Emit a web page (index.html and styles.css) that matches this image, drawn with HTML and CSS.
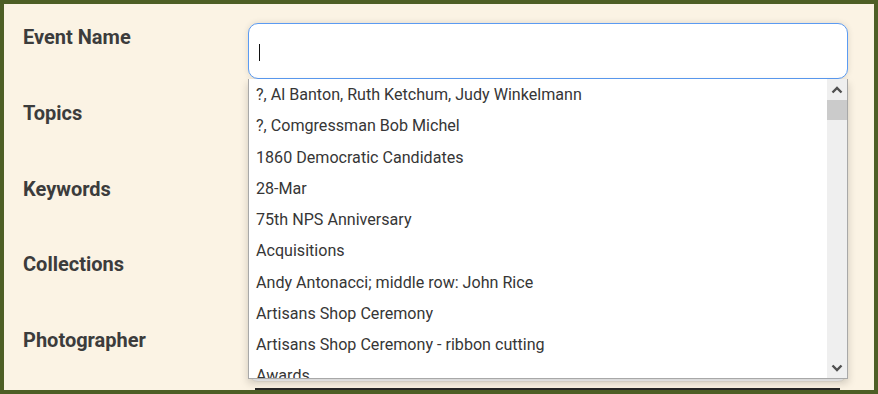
FILE: index.html
```html
<!DOCTYPE html>
<html lang="en">
<head>
    <meta charset="UTF-8">
    <meta name="viewport" content="width=device-width, initial-scale=1.0">
    <title>Photo Search</title>
    <link rel="stylesheet" href="styles.css">
</head>
<body>
    <div class="frame">
        <div class="form">
            <div class="row">
                <label class="field-label">Event Name</label>
                <div class="field">
                    <div class="text-box focused"><span class="caret"></span></div>
                    <div class="suggest">
                        <ul class="suggest-list">
                            <li>?, Al Banton, Ruth Ketchum, Judy Winkelmann</li>
                            <li>?, Comgressman Bob Michel</li>
                            <li>1860 Democratic Candidates</li>
                            <li>28-Mar</li>
                            <li>75th NPS Anniversary</li>
                            <li>Acquisitions</li>
                            <li>Andy Antonacci; middle row: John Rice</li>
                            <li>Artisans Shop Ceremony</li>
                            <li>Artisans Shop Ceremony - ribbon cutting</li>
                            <li>Awards</li>
                        </ul>
                        <div class="scrollbar">
                            <div class="scroll-btn">
                                <svg width="12" height="8" viewBox="0 0 12 8"><polyline points="1.5,6.5 6,2 10.5,6.5" fill="none" stroke="#505050" stroke-width="2.4"/></svg>
                            </div>
                            <div class="scroll-thumb"></div>
                            <div class="scroll-track"></div>
                            <div class="scroll-btn">
                                <svg width="12" height="8" viewBox="0 0 12 8"><polyline points="1.5,1.5 6,6 10.5,1.5" fill="none" stroke="#505050" stroke-width="2.4"/></svg>
                            </div>
                        </div>
                    </div>
                </div>
            </div>
            <div class="row">
                <label class="field-label">Topics</label>
                <div class="field"><div class="text-box"></div></div>
            </div>
            <div class="row">
                <label class="field-label">Keywords</label>
                <div class="field"><div class="text-box"></div></div>
            </div>
            <div class="row">
                <label class="field-label">Collections</label>
                <div class="field"><div class="text-box"></div></div>
            </div>
            <div class="row">
                <label class="field-label">Photographer</label>
                <div class="field"><div class="text-box"></div></div>
            </div>
            <div class="row">
                <span></span>
                <div class="next-edge"></div>
            </div>
        </div>
    </div>
</body>
</html>
```

FILE: styles.css
```css
body { margin: 0; background-color: #4d5e25; font-family: Roboto, "Liberation Sans", sans-serif; }
.frame { box-sizing: border-box; width: 878px; height: 394px; border: 4px solid #4d5e25; background-color: #fbf3e4; padding: 19px 26px 0 19px; overflow: hidden; }
.form { display: flex; flex-direction: column; gap: 19.75px; }
.row { display: grid; grid-template-columns: 225px 600px; }
.field-label { font-size: 20px; font-weight: bold; line-height: 24px; color: #3c3c3c; padding-top: 2px; }
.field { position: relative; }
.text-box { box-sizing: border-box; height: 56px; background: #fff; border: 1px solid #efe8da; border-radius: 10px; display: flex; align-items: center; }
.text-box.focused { border-color: #5b9bf2; box-shadow: 0 0 6px rgba(0,0,0,0.12); }
.caret { display: block; width: 1px; height: 17px; background: #111; margin-left: 10px; margin-top: 2px; }

/* autocomplete dropdown */
.suggest { position: absolute; top: 56px; left: 0; width: 600px; height: 300px; box-sizing: border-box; background: #fff; border: 1px solid #a8a8a8; border-top: none; box-shadow: 0 4px 8px rgba(0,0,0,0.18); display: flex; z-index: 5; overflow: hidden; }
.suggest-list { flex: 1; list-style: none; margin: 0; padding: 0; }
.suggest-list li { padding: 6px 7px; font-size: 16.1px; line-height: 19.25px; color: #363636; white-space: nowrap; }
.scrollbar { width: 20px; background: #efefef; display: flex; flex-direction: column; }
.scroll-btn { height: 21px; display: flex; align-items: center; justify-content: center; }
.scroll-thumb { height: 20px; background: #cbcbcb; }
.scroll-track { flex: 1; }

.next-edge { height: 2px; margin: -14px 8px 0 7px; background: #262626; }
```
